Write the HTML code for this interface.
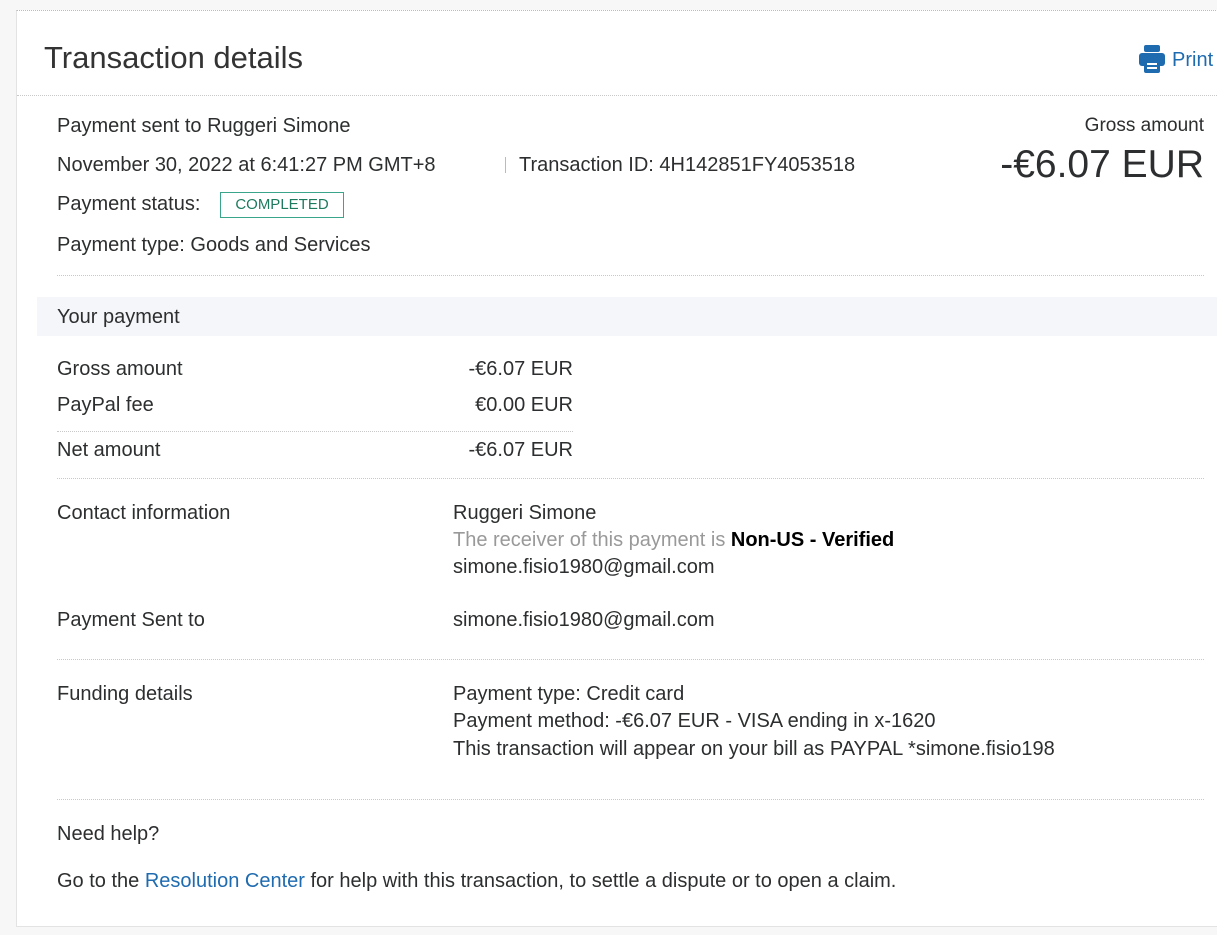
<!DOCTYPE html>
<html><head><meta charset="utf-8"><style>
body{margin:0;width:1217px;height:935px;background:#f7f7f7;font-family:"Liberation Sans",sans-serif;color:#2c2e2f;position:relative;overflow:hidden}
.card{position:absolute;left:16px;top:10px;width:1201px;height:915px;background:#fff;border-left:1px solid #e3e3e3;border-bottom:1px solid #e3e3e3;border-top:1px dotted #bbb}
.t{position:absolute;font-size:20px;line-height:22px;white-space:nowrap}
.hr{position:absolute;border-top:1px dotted #c8c8c8;height:0}
a{color:#1f6bb0;text-decoration:none}
</style></head><body>
<div class="card"></div>
<div class="t" style="left:44px;top:38px;font-size:31px;line-height:40px;font-weight:300;color:#333">Transaction details</div>
<svg style="position:absolute;left:1139px;top:45px" width="26" height="28" viewBox="0 0 26 28"><rect x="5" y="0" width="16" height="7" rx="2" fill="#1f6bb0"/><rect x="0" y="8" width="26" height="13" rx="3" fill="#1f6bb0"/><rect x="5" y="15" width="16" height="13" rx="2" fill="#1f6bb0"/><rect x="8" y="18" width="10" height="2" fill="#fff"/><rect x="8" y="22" width="10" height="2" fill="#fff"/></svg>
<div class="t" style="left:1172px;top:49px;font-size:20px;color:#1f6bb0">Print</div>
<div class="hr" style="left:17px;top:95px;width:1200px"></div>
<div class="t" style="left:57px;top:115px">Payment sent to Ruggeri Simone</div>
<div class="t" style="right:13px;top:115px;font-size:19px">Gross amount</div>
<div class="t" style="right:13px;top:143px;font-size:39px;line-height:44px">-€6.07 EUR</div>
<div class="t" style="left:57px;top:154px">November 30, 2022 at 6:41:27 PM GMT+8</div>
<div style="position:absolute;left:505px;top:157px;width:1px;height:16px;background:#bbb"></div>
<div class="t" style="left:519px;top:154px">Transaction ID: 4H142851FY4053518</div>
<div class="t" style="left:57px;top:193px">Payment status:</div>
<div class="t" style="left:220px;top:192px;width:122px;height:24px;border:1px solid #3aa58a;color:#1d7a5e;font-size:15px;line-height:24px;text-align:center">COMPLETED</div>
<div class="t" style="left:57px;top:234px">Payment type: Goods and Services</div>
<div class="hr" style="left:57px;top:275px;width:1147px"></div>
<div style="position:absolute;left:37px;top:297px;width:1180px;height:39px;background:#f5f6f9"></div>
<div class="t" style="left:57px;top:306px">Your payment</div>
<div class="t" style="left:57px;top:358px">Gross amount</div><div class="t" style="right:644px;top:358px">-€6.07 EUR</div>
<div class="t" style="left:57px;top:394px">PayPal fee</div><div class="t" style="right:644px;top:394px">€0.00 EUR</div>
<div class="hr" style="left:57px;top:431px;width:516px"></div>
<div class="t" style="left:57px;top:439px">Net amount</div><div class="t" style="right:644px;top:439px">-€6.07 EUR</div>
<div class="hr" style="left:57px;top:478px;width:1147px"></div>
<div class="t" style="left:57px;top:502px">Contact information</div>
<div class="t" style="left:453px;top:502px">Ruggeri Simone</div>
<div class="t" style="left:453px;top:529px;color:#999">The receiver of this payment is <b style="color:#000">Non-US - Verified</b></div>
<div class="t" style="left:453px;top:556px">simone.fisio1980@gmail.com</div>
<div class="t" style="left:57px;top:609px">Payment Sent to</div>
<div class="t" style="left:453px;top:609px">simone.fisio1980@gmail.com</div>
<div class="hr" style="left:57px;top:659px;width:1147px"></div>
<div class="t" style="left:57px;top:683px">Funding details</div>
<div class="t" style="left:453px;top:683px">Payment type: Credit card</div>
<div class="t" style="left:453px;top:710px">Payment method: -€6.07 EUR - VISA ending in x-1620</div>
<div class="t" style="left:453px;top:738px">This transaction will appear on your bill as PAYPAL *simone.fisio198</div>
<div class="hr" style="left:57px;top:799px;width:1147px"></div>
<div class="t" style="left:57px;top:823px">Need help?</div>
<div class="t" style="left:57px;top:870px">Go to the <a>Resolution Center</a> for help with this transaction, to settle a dispute or to open a claim.</div>
</body></html>
